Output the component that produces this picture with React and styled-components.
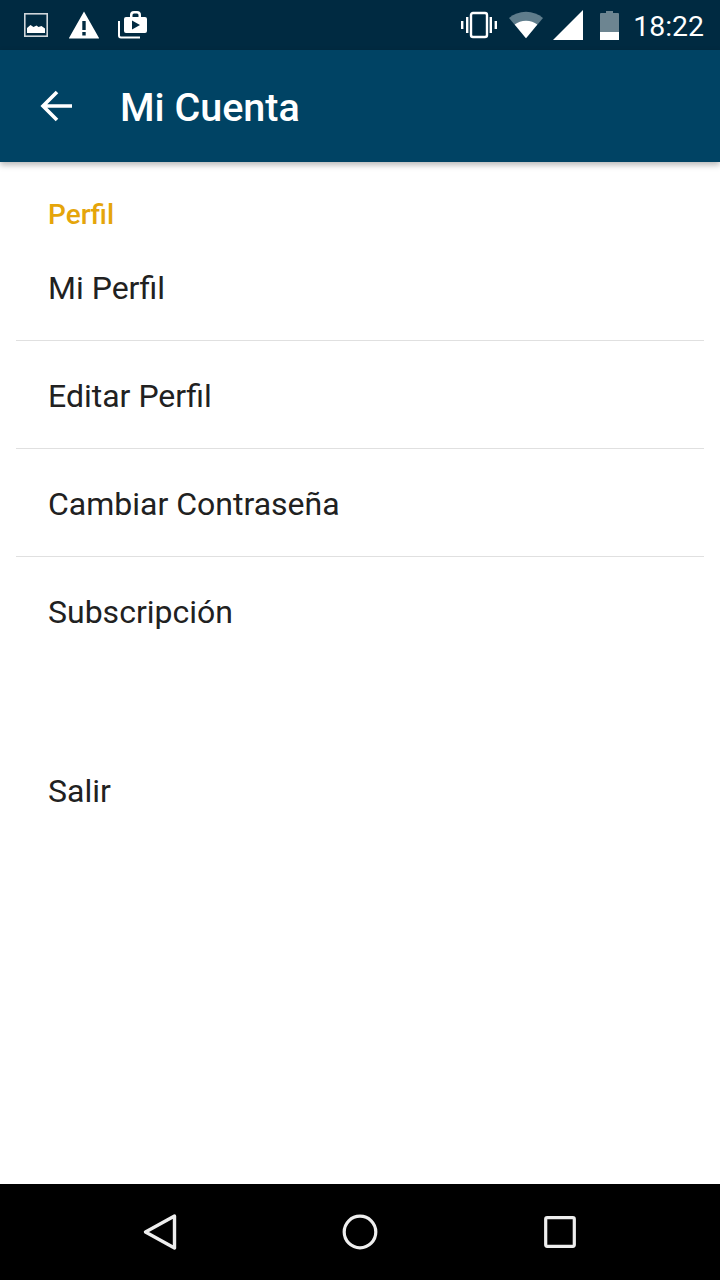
import React from "react";
import styled, { createGlobalStyle } from "styled-components";

const Global = createGlobalStyle`
  html, body { margin: 0; padding: 0; background: #fff; }
  body { font-family: Roboto, "Noto Sans", sans-serif; }
`;

const Screen = styled.div`
  width: 720px;
  height: 1280px;
  display: flex;
  flex-direction: column;
  background: #fff;
  overflow: hidden;
`;

const StatusBar = styled.div`
  height: 50px;
  flex: none;
  background: #002a41;
  display: flex;
  align-items: center;
  justify-content: space-between;
  padding: 0 16px 0 24px;
`;

const StatusGroup = styled.div`
  display: flex;
  align-items: center;
`;

const Time = styled.span`
  color: #fff;
  font-size: 28.4px;
  line-height: 50px;
  margin-left: 14px;
  padding-top: 4px;
`;

const AppBar = styled.header`
  height: 112px;
  flex: none;
  background: #004364;
  display: flex;
  align-items: center;
  padding-left: 39px;
  box-sizing: border-box;
  box-shadow: 0 3px 6px rgba(0, 0, 0, 0.28);
  position: relative;
  z-index: 1;
`;

const Title = styled.h1`
  margin: 0 0 0 48px;
  padding-top: 4px;
  color: #fff;
  font-size: 39.5px;
  font-weight: 500;
  line-height: 50px;
`;

const Content = styled.main`
  flex: 1;
  display: flex;
  flex-direction: column;
  padding: 35px 16px 0;
`;

const SectionTitle = styled.div`
  color: #e5a50a;
  font-size: 28px;
  font-weight: 500;
  line-height: 36px;
  padding-left: 32px;
`;

const Row = styled.div`
  height: 108px;
  box-sizing: border-box;
  display: flex;
  align-items: center;
  padding: 2px 0 0 32px;
  font-size: 32px;
  color: #212121;
  border-bottom: ${(p) => (p.$divider ? "1px solid #e0e0e0" : "none")};
`;

const ExitRow = styled(Row)`
  margin-top: 71px;
`;

const NavBar = styled.nav`
  height: 96px;
  flex: none;
  background: #000;
  display: grid;
  grid-template-columns: repeat(3, 200px);
  justify-content: center;
  justify-items: center;
  align-items: center;
`;

const StatusSvg = styled.svg`
  display: block;
  flex: none;
  margin-left: ${(p) => p.$gap || 0}px;
`;

const ImageIcon = () => (
  <StatusSvg width="24" height="24" viewBox="0 0 24 24">
    <rect x="0.8" y="0.8" width="22.4" height="22.4" fill="none" stroke="#cfd6da" strokeWidth="1.6" />
    <path d="M3 20v-5l3.500-3 3 2 3-1.500 2 1.500 3-1 3.500 2.500v4.500z" fill="#fff" />
  </StatusSvg>
);

const WarningIcon = () => (
  <StatusSvg $gap={21} width="30" height="28" viewBox="0 0 30 28">
    <path fillRule="evenodd" fill="#fff" d="M15 0.500 L30 27 a0.500 0.500 0 0 1 -0.500 0.500 H0.500 a0.500 0.500 0 0 1 -0.500 -0.500 Z M13.300 10v9h3.400v-9z M13.300 21v3.500h3.400V21z" />
  </StatusSvg>
);

const ShopIcon = () => (
  <StatusSvg $gap={19} width="30" height="29" viewBox="0 0 30 29">
    <path fill="none" stroke="#fff" strokeWidth="2" d="M1 10v14.500a2 2 0 0 0 2 2H22" />
    <path fillRule="evenodd" fill="#fff" d="M12 6V4a4 4 0 0 1 4-4h3a4 4 0 0 1 4 4v2h4a2 2 0 0 1 2 2v12a2 2 0 0 1-2 2H8a2 2 0 0 1-2-2V8a2 2 0 0 1 2-2z M14.500 6h6V4a1.500 1.500 0 0 0-1.500-1.500h-3A1.500 1.500 0 0 0 14.500 4z M14 9.500v9l8-4.500z" />
  </StatusSvg>
);

const VibrateIcon = () => (
  <StatusSvg width="36" height="28" viewBox="0 0 36 28">
    <rect x="10" y="2" width="16" height="24" rx="2" fill="none" stroke="#fff" strokeWidth="2.400" />
    <path fill="#fff" d="M5 6h2.400v16H5zM0 10h2.400v8H0zM28.600 6H31v16h-2.400zM33.600 10H36v8h-2.400z" />
  </StatusSvg>
);

const WifiIcon = () => (
  <StatusSvg $gap={12} width="34" height="28" viewBox="0 0 36 28">
    <path fill="#5f7d8c" d="M18 28 0 6.500C5 2.500 11 0 18 0s13 2.500 18 6.500z" />
    <path fill="#fff" d="M18 28 6 13.500c3.300-2.500 7.400-4 12-4s8.700 1.500 12 4z" />
  </StatusSvg>
);

const SignalIcon = () => (
  <StatusSvg $gap={10} width="30" height="30" viewBox="0 0 30 30">
    <path fill="#fff" d="M0 30 30 0v30z" />
  </StatusSvg>
);

const BatteryIcon = () => (
  <StatusSvg $gap={17} width="19" height="29" viewBox="0 0 19 29">
    <path fill="#6d8591" d="M6 0h7v2h5a1 1 0 0 1 1 1v18H0V3a1 1 0 0 1 1-1h5z" />
    <path fill="#fff" d="M0 21h19v8H0z" />
  </StatusSvg>
);

const BackSvg = styled.svg`
  display: block;
  flex: none;
`;

const BackIcon = () => (
  <BackSvg width="33" height="32" viewBox="0 0 33 32">
    <path fill="none" stroke="#fff" strokeWidth="3.600" d="M33 16H3M18 2 4 16l14 14" />
  </BackSvg>
);

const NavBack = () => (
  <svg width="36" height="38" viewBox="0 0 36 38">
    <path d="M32.500 3 3.500 19l29 16z" fill="none" stroke="#eee" strokeWidth="3.400" strokeLinejoin="round" />
  </svg>
);

const NavHome = () => (
  <svg width="36" height="36" viewBox="0 0 36 36">
    <circle cx="18" cy="18" r="15.800" fill="none" stroke="#eee" strokeWidth="3.200" />
  </svg>
);

const NavRecent = () => (
  <svg width="32" height="32" viewBox="0 0 32 32">
    <rect x="1.700" y="1.700" width="28.600" height="28.600" rx="1.500" fill="none" stroke="#eee" strokeWidth="3.200" />
  </svg>
);

export default function App() {
  return (
    <Screen>
      <Global />
      <StatusBar>
        <StatusGroup>
          <ImageIcon />
          <WarningIcon />
          <ShopIcon />
        </StatusGroup>
        <StatusGroup>
          <VibrateIcon />
          <WifiIcon />
          <SignalIcon />
          <BatteryIcon />
          <Time>18:22</Time>
        </StatusGroup>
      </StatusBar>
      <AppBar>
        <BackIcon />
        <Title>Mi Cuenta</Title>
      </AppBar>
      <Content>
        <SectionTitle>Perfil</SectionTitle>
        <Row $divider>Mi Perfil</Row>
        <Row $divider>Editar Perfil</Row>
        <Row $divider>Cambiar Contraseña</Row>
        <Row>Subscripción</Row>
        <ExitRow>Salir</ExitRow>
      </Content>
      <NavBar>
        <NavBack />
        <NavHome />
        <NavRecent />
      </NavBar>
    </Screen>
  );
}
